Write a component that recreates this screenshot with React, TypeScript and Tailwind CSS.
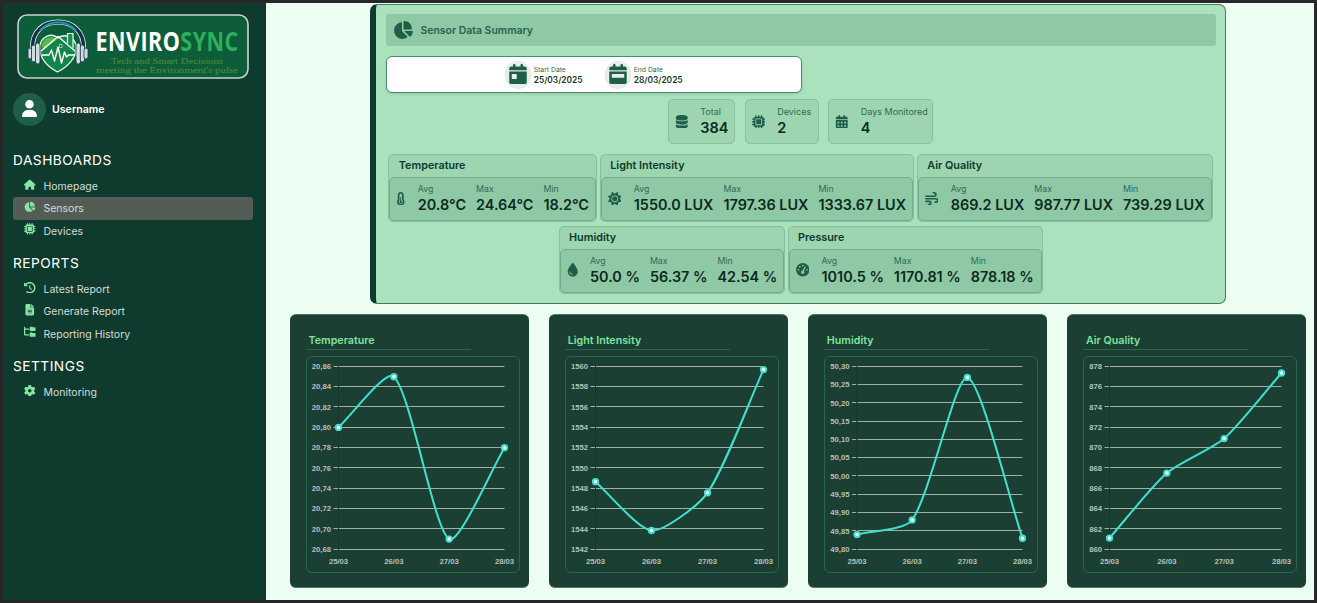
import type { ReactNode } from "react";
import {
  FaHouse,
  FaChartPie,
  FaMicrochip,
  FaClockRotateLeft,
  FaFileLines,
  FaFolderTree,
  FaGear,
  FaUser,
  FaCalendarDay,
  FaCalendarWeek,
  FaCalendarDays,
  FaDatabase,
  FaTemperatureHalf,
  FaSun,
  FaWind,
  FaDroplet,
  FaGaugeHigh,
} from "react-icons/fa6";

function Logo() {
  return (
    <svg viewBox="0 0 232 65" className="block h-[65px] w-[232px]">
      <rect x="1" y="1" width="230" height="63" rx="9" fill="#0d5c3a" stroke="#c9d3ce" strokeWidth="1.6" />
      <path d="M15.500 34C15 17 27 8 41 8s26 9 25.500 26" fill="none" stroke="#dfe9e6" strokeWidth="5" />
      <path d="M15.500 34C15 17 27 8 41 8s26 9 25.500 26" fill="none" stroke="#12304a" strokeWidth="3.400" />
      <path d="M23 16.500C33 5.500 49 5.500 59 16.500" fill="none" stroke="#1597a8" strokeWidth="2.200" />
      <path d="M40.500 58C31 53 21.500 44 23 32c1-9 11-14 18-8 7-5 17-1 18 8 1.500 12-9 21-18.500 26z" fill="#12854a" stroke="#eaf5ef" strokeWidth="1.300" />
      <path d="M24.500 32c1-8 10-11.500 15.500-6.500L26.500 36z" fill="#5cb84c" />
      <path d="M23.500 37.500L41 22.500l17.500 15" fill="none" stroke="#eef8f2" strokeWidth="1.500" />
      <path d="M50.500 29.500V19.500h5.500v15" fill="#188b50" stroke="#eef8f2" strokeWidth="1.200" />
      <path d="M42.500 30.500h2.500v3h-2.500z" fill="#0d5c3a" stroke="#dff0e6" strokeWidth="0.700" />
      <path d="M25 41h7l2.500-5 3 11 3.500-14 3.500 16 3-11 2 5 2-2h7" fill="none" stroke="#fff" strokeWidth="1.400" strokeLinejoin="round" />
      <g fill="#cfdbe0" stroke="#17344a" strokeWidth="0.800">
        <rect x="11" y="34" width="4" height="11" rx="2" />
        <rect x="14.500" y="31" width="4.200" height="17" rx="2.100" />
        <rect x="18.500" y="29" width="4.500" height="21" rx="2.200" />
        <rect x="59" y="29" width="4.500" height="21" rx="2.200" />
        <rect x="63.300" y="31" width="4.200" height="17" rx="2.100" />
        <rect x="67" y="34" width="4" height="11" rx="2" />
      </g>
      <text transform="translate(78.500 37) scale(0.797 1)" fontFamily="'Open Sans', sans-serif" fontWeight="700" fontSize="27" letterSpacing="0.600" fill="#fff">
        ENVIRO<tspan fill="#2fae5c">SYNC</tspan>
      </text>
      <g fontFamily="'Liberation Serif', serif" fontSize="8" fill="#458a3c" stroke="#458a3c" strokeWidth="0.150">
        <text x="94" y="50" textLength="112" lengthAdjust="spacingAndGlyphs">Tech and Smart Decisions</text>
        <text x="79" y="58.500" textLength="142" lengthAdjust="spacingAndGlyphs">meeting the Environment's pulse</text>
      </g>
    </svg>
  );
}

function NavItem({ icon, label, active = false }: { icon: ReactNode; label: string; active?: boolean }) {
  return (
    <div className={`flex h-[22.3px] items-center rounded-[3px] pl-[11px] ${active ? "bg-[#535d56]" : ""}`}>
      <span className="mt-[-3px] flex w-[19.500px] shrink-0 text-[11.500px] text-[#86e5a2]">{icon}</span>
      <span className="pt-[1.500px] text-[10.500px] text-[#d5dbd8]">{label}</span>
    </div>
  );
}

function NavGroup({ title, children }: { title: string; children: ReactNode }) {
  return (
    <section className="mb-[11px]">
      <h2 className="mb-[5px] h-5 text-[13.700px] leading-5 tracking-[0.500px] text-white">{title}</h2>
      {children}
    </section>
  );
}

function DateField({ icon, label, value }: { icon: ReactNode; label: string; value: string }) {
  return (
    <div className="flex w-[100px] items-center gap-[3px]">
      <span className="flex h-[28px] w-[26px] items-center justify-center rounded-full border border-[#dbe6e1] bg-[#e8eeeb] pb-[2px] text-[20px] text-[#1f5e48]">{icon}</span>
      <div className="flex flex-col">
        <span className="text-[6.800px] leading-[11px] text-[#2f6b54]">{label}</span>
        <span className="text-[8.350px] leading-[11px] font-semibold text-[#12382b]">{value}</span>
      </div>
    </div>
  );
}

function Total({ icon, label, value, size }: { icon: ReactNode; label: string; value: string; size: string }) {
  return (
    <div className={`flex h-[45px] items-center gap-[12px] rounded-[5px] border border-[#86c09c] bg-[#9cd5b0] pl-[6px] ${size}`}>
      <span className="flex text-[13.500px] text-[#1f5e48]">{icon}</span>
      <div className="flex flex-col">
        <span className="mt-[-2px] text-[9px] leading-[14px] whitespace-nowrap text-[#2e6c54]">{label}</span>
        <span className="text-[14.500px] leading-[17px] font-semibold text-[#0c2a20]">{value}</span>
      </div>
    </div>
  );
}

type Measure = { name: string; icon: ReactNode; size: string; inset: string; values: [string, string, string] };

function MeasureCard({ name, icon, size, inset, values }: Measure) {
  return (
    <div className={`flex h-[68px] flex-col rounded-[5px] border border-[#86c09c] bg-[#9cd5b0] ${size}`}>
      <h3 className="h-[22px] shrink-0 pl-[9.500px] text-[10.800px] leading-[22px] font-semibold text-[#0f3a2c]">{name}</h3>
      <div className={`flex flex-1 items-center rounded-[5px] border border-[#74ac8b] bg-[#8fc8a5] pb-px ${inset}`}>
        <span className="flex shrink-0 text-[13.500px] text-[#1f5e48]">{icon}</span>
        <div className="flex gap-[10px]">
          {["Avg", "Max", "Min"].map((label, i) => (
            <div key={label} className="flex flex-col whitespace-nowrap">
              <span className="mt-[-1px] text-[8.800px] leading-[13px] text-[#2e6c54]">{label}</span>
              <span className="text-[14.400px] leading-[19px] font-semibold text-[#0c2a20]">{values[i]}</span>
            </div>
          ))}
        </div>
      </div>
    </div>
  );
}

type Series = { title: string; min: number; max: number; step: number; digits: number; left: number; data: number[] };

const CHARTS: Series[] = [
  { title: "Temperature", min: 20.68, max: 20.86, step: 0.02, digits: 2, left: 32, data: [20.8, 20.85, 20.69, 20.78] },
  { title: "Light Intensity", min: 1542, max: 1560, step: 2, digits: 0, left: 30, data: [1548.65, 1543.84, 1547.55, 1559.7] },
  { title: "Humidity", min: 49.8, max: 50.3, step: 0.05, digits: 2, left: 32.5, data: [49.84, 49.88, 50.27, 49.83] },
  { title: "Air Quality", min: 860, max: 878, step: 2, digits: 0, left: 26, data: [861.1, 867.5, 870.9, 877.36] },
];

const TOP = 10;
const BOTTOM = 192.7;
const RIGHT = 198;
const TENSION = 0.23;

function curve(points: [number, number][], left: number) {
  const cap = (x: number, y: number) =>
    `${Math.min(RIGHT, Math.max(left, x)).toFixed(2)} ${Math.min(BOTTOM, Math.max(TOP, y)).toFixed(2)}`;
  const controls = points.map((p, i) => {
    const a = points[Math.max(0, i - 1)];
    const b = points[Math.min(points.length - 1, i + 1)];
    const da = Math.hypot(p[0] - a[0], p[1] - a[1]);
    const db = Math.hypot(b[0] - p[0], b[1] - p[1]);
    const fa = (TENSION * da) / (da + db);
    const fb = (TENSION * db) / (da + db);
    const dx = b[0] - a[0];
    const dy = b[1] - a[1];
    return { before: cap(p[0] - fa * dx, p[1] - fa * dy), after: cap(p[0] + fb * dx, p[1] + fb * dy) };
  });
  return points
    .map((p, i) => (i === 0 ? `M${p[0]} ${p[1]}` : `C${controls[i - 1].after} ${controls[i].before} ${p[0]} ${p[1]}`))
    .join("");
}

function ChartCard({ title, min, max, step, digits, left, data }: Series) {
  const count = Math.round((max - min) / step);
  const y = (v: number) => BOTTOM - ((v - min) / (max - min)) * (BOTTOM - TOP);
  const x = (i: number) => left + (i * (RIGHT - left)) / 3;
  const points = data.map((v, i): [number, number] => [x(i), y(v)]);
  return (
    <article className="flex h-[274px] w-[238.500px] flex-col rounded-[6px] border-y border-[#4f7566] bg-[#1b4033] pt-[15px] pl-[15.500px]">
      <h3 className="h-[20px] w-[165px] border-b border-[#25664d] pl-[3px] text-[10.700px] leading-[21px] font-semibold text-[#7fe39d]">{title}</h3>
      <div className="mt-[6px] h-[217px] w-[214.500px] rounded-[6px] border border-[#25664d]">
        <svg viewBox="0.5 0.5 213 215" className="block h-[215px] w-[213px]">
          {Array.from({ length: count + 1 }, (_, i) => {
            const value = max - i * step;
            const gy = Math.floor(y(value) + 0.3);
            return (
              <g key={i}>
                <path d={`M${left - 5} ${gy}h4.500M${left + 0.5} ${gy}H${RIGHT}`} stroke="#a0b0a8" strokeWidth="1" />
                <text x={left - 7.5} y={y(value) + 2.6} textAnchor="end" className="fill-[#b5c1bb] font-['Liberation_Sans',sans-serif] text-[7.700px] font-bold">
                  {value.toFixed(digits).replace(".", ",")}
                </text>
              </g>
            );
          })}
          <path d={`M${left} ${TOP}V${BOTTOM}`} stroke="#18382c" strokeWidth="1" />
          {["25/03", "26/03", "27/03", "28/03"].map((day, i) => (
            <text key={day} x={x(i)} y="207.300" textAnchor="middle" className="fill-[#b5c1bb] font-['Liberation_Sans',sans-serif] text-[7.700px] font-bold">
              {day}
            </text>
          ))}
          <path d={curve(points, left)} fill="none" stroke="#40e0d0" strokeWidth="2" />
          {points.map(([px, py], i) => (
            <circle key={i} cx={px} cy={py} r="2.700" fill="#fff" stroke="#40e0d0" strokeWidth="1.900" />
          ))}
        </svg>
      </div>
    </article>
  );
}

export default function App() {
  return (
    <div className="flex h-[603px] w-[1317px] overflow-hidden border-[3px] border-[#27272a] bg-[#ecfef1] font-['Inter',sans-serif]">
      <aside className="flex w-[263px] shrink-0 flex-col bg-[#0f3b2e] px-[10px] pt-[11px]">
        <div className="pl-[4px]">
          <Logo />
        </div>
        <div className="mt-[14px] mb-[24px] flex items-center gap-[6px]">
          <span className="flex h-[33px] w-[33px] items-center justify-center rounded-full bg-[#1f5e48] pb-[3px] text-[17px] text-white">
            <FaUser />
          </span>
          <span className="pt-px text-[10.600px] font-semibold text-white">Username</span>
        </div>
        <nav className="w-[240px]">
          <NavGroup title="DASHBOARDS">
            <NavItem icon={<FaHouse />} label="Homepage" />
            <NavItem icon={<FaChartPie />} label="Sensors" active />
            <NavItem icon={<FaMicrochip />} label="Devices" />
          </NavGroup>
          <NavGroup title="REPORTS">
            <NavItem icon={<FaClockRotateLeft />} label="Latest Report" />
            <NavItem icon={<FaFileLines />} label="Generate Report" />
            <NavItem icon={<FaFolderTree />} label="Reporting History" />
          </NavGroup>
          <NavGroup title="SETTINGS">
            <NavItem icon={<FaGear />} label="Monitoring" />
          </NavGroup>
        </nav>
      </aside>

      <main className="flex flex-1 flex-col pt-px">
        <section className="ml-[104px] flex h-[300px] w-[856px] flex-col rounded-[7px] border border-l-[6px] border-[#3f7c63] border-l-[#0f3b2e] bg-[#a9e2bc] px-[9.500px] pt-[9px]">
          <header className="flex h-[32px] shrink-0 items-center gap-[8px] rounded-[3px] bg-[#8fc8a5] pl-[7px]">
            <FaChartPie className="text-[20px] text-[#1f5e48]" />
            <h1 className="pt-[2px] text-[10.450px] font-semibold text-[#23644c]">Sensor Data Summary</h1>
          </header>
          <div className="mt-[10px] flex h-[37px] w-[416px] shrink-0 items-center justify-center rounded-[6px] border border-[#4d8a70] bg-white pl-[22.500px] shadow-sm">
            <DateField icon={<FaCalendarDay />} label="Start Date" value="25/03/2025" />
            <DateField icon={<FaCalendarWeek />} label="End Date" value="28/03/2025" />
          </div>
          <div className="mt-[6px] flex shrink-0 justify-center gap-[9.500px]">
            <Total icon={<FaDatabase />} label="Total" value="384" size="w-[67.500px]" />
            <Total icon={<FaMicrochip />} label="Devices" value="2" size="w-[74px]" />
            <Total icon={<FaCalendarDays />} label="Days Monitored" value="4" size="w-[105px]" />
          </div>
          <div className="mt-[10px] flex shrink-0 flex-wrap justify-center gap-x-[3px] gap-y-[3.500px]">
            <MeasureCard name="Temperature" icon={<FaTemperatureHalf />} size="w-[208.500px]" inset="pl-[4px] gap-[10px]" values={["20.8°C", "24.64°C", "18.2°C"]} />
            <MeasureCard name="Light Intensity" icon={<FaSun />} size="w-[314px]" inset="pl-[6px] gap-[12.500px]" values={["1550.0 LUX", "1797.36 LUX", "1333.67 LUX"]} />
            <MeasureCard name="Air Quality" icon={<FaWind />} size="w-[296px]" inset="pl-[6px] gap-[12.500px]" values={["869.2 LUX", "987.77 LUX", "739.29 LUX"]} />
            <MeasureCard name="Humidity" icon={<FaDroplet />} size="w-[226px]" inset="pl-[5px] gap-[11px]" values={["50.0 %", "56.37 %", "42.54 %"]} />
            <MeasureCard name="Pressure" icon={<FaGaugeHigh />} size="w-[255px]" inset="pl-[6px] gap-[12.500px]" values={["1010.5 %", "1170.81 %", "878.18 %"]} />
          </div>
        </section>
        <section className="mt-[10px] flex justify-between pr-[8px] pl-[24px]">
          {CHARTS.map((chart) => (
            <ChartCard key={chart.title} {...chart} />
          ))}
        </section>
      </main>
    </div>
  );
}
